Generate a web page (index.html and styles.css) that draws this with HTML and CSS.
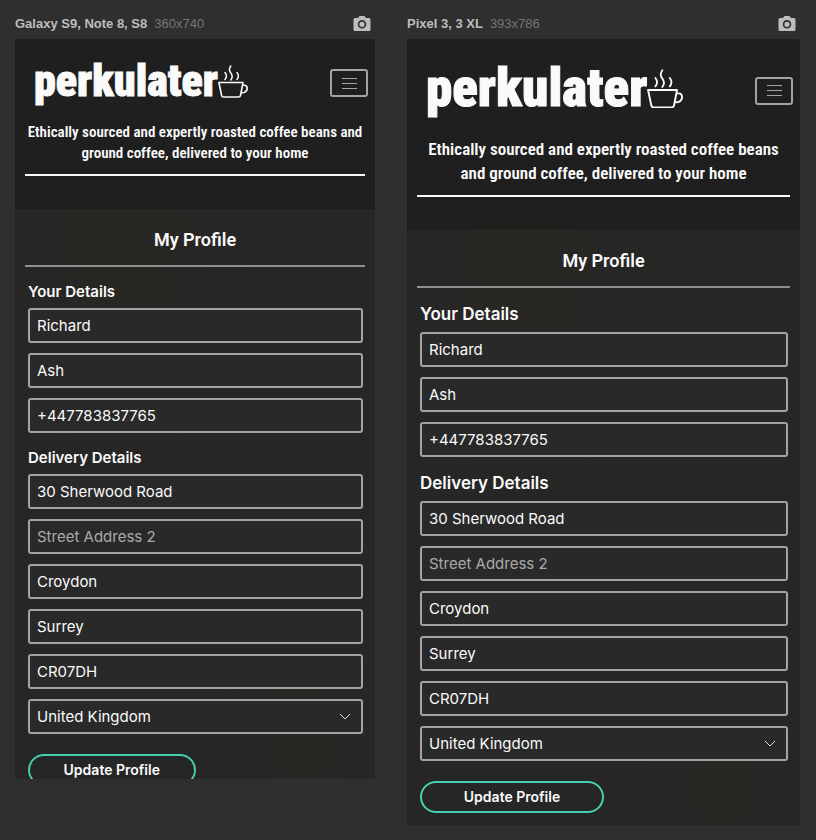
FILE: index.html
```html
<!DOCTYPE html>
<html lang="en">
<head>
<meta charset="utf-8">
<title>Perkulater – My Profile</title>
<link rel="stylesheet" href="styles.css">
</head>
<body>
<svg class="defs" aria-hidden="true">
  <symbol id="camera" viewBox="0 0 18 16">
    <path fill-rule="evenodd" d="M6.500 0h5l1.500 2H16a1.500 1.500 0 0 1 1.500 1.500v10a1.500 1.500 0 0 1-1.500 1.500H2a1.500 1.500 0 0 1-1.500-1.500v-10A1.500 1.500 0 0 1 2 2h3zM9 4a4.300 4.300 0 1 0 0 8.600a4.300 4.300 0 0 0 0-8.600zM9 5.700a2.600 2.600 0 1 1 0 5.200a2.600 2.600 0 0 1 0-5.200z"/>
  </symbol>
  <symbol id="cup" viewBox="0 0 30 33">
    <g fill="none" stroke="#fafafa" stroke-linecap="round" stroke-linejoin="round">
      <path stroke-width="1.600" d="M.9 17.500H25L22.500 30.500Q22.200 32 20.500 32H5.600Q4 32 3.600 30.500Z"/>
      <path stroke-width="1.600" d="M24.800 20.300h1.400q3 0 3 3t-3 4.200l-3 .3"/>
      <path stroke-width="1.500" d="M12.800 1q-2.700 3.500 0 7t0 7M7 7.500q2.800 3.500 0 7M19 7.500q2.800 3.500 0 7"/>
    </g>
  </symbol>
</svg>
<main class="board">
  <section class="device">
    <header class="device-bar">
      <h2 class="device-name">Galaxy S9, Note 8, S8</h2>
      <span class="device-size">360x740</span>
      <button class="shot" type="button" aria-label="Take screenshot"><svg><use href="#camera"/></svg></button>
    </header>
    <div class="screen screen-s">
      <header class="top">
        <nav class="nav">
          <a class="logo" href="#">perkulater<svg class="cup"><use href="#cup"/></svg></a>
          <button class="burger" type="button" aria-label="Menu"><span></span><span></span><span></span></button>
        </nav>
        <p class="tagline">Ethically sourced and expertly roasted coffee beans and ground coffee, delivered to your home</p>
      </header>
      <form class="profile">
        <h1 class="title">My Profile</h1>
        <fieldset class="group">
          <legend class="legend">Your Details</legend>
          <input class="field" aria-label="First name" value="Richard">
          <input class="field" aria-label="Last name" value="Ash">
          <input class="field" type="tel" aria-label="Phone number" value="+447783837765">
        </fieldset>
        <fieldset class="group">
          <legend class="legend">Delivery Details</legend>
          <input class="field" aria-label="Street Address 1" value="30 Sherwood Road">
          <input class="field" aria-label="Street Address 2" placeholder="Street Address 2">
          <input class="field" aria-label="Town or city" value="Croydon">
          <input class="field" aria-label="County" value="Surrey">
          <input class="field" aria-label="Postcode" value="CR07DH">
          <div class="pick">
            <select class="field" aria-label="Country"><option>United Kingdom</option></select>
            <svg class="chevron" viewBox="0 0 12 8"><path d="M1 1l5 5 5-5"/></svg>
          </div>
        </fieldset>
        <button class="update" type="button">Update Profile</button>
      </form>
    </div>
  </section>
  <section class="device">
    <header class="device-bar">
      <h2 class="device-name">Pixel 3, 3 XL</h2>
      <span class="device-size">393x786</span>
      <button class="shot" type="button" aria-label="Take screenshot"><svg><use href="#camera"/></svg></button>
    </header>
    <div class="screen screen-l">
      <header class="top">
        <nav class="nav">
          <a class="logo" href="#">perkulater<svg class="cup"><use href="#cup"/></svg></a>
          <button class="burger" type="button" aria-label="Menu"><span></span><span></span><span></span></button>
        </nav>
        <p class="tagline">Ethically sourced and expertly roasted coffee beans and ground coffee, delivered to your home</p>
      </header>
      <form class="profile">
        <h1 class="title">My Profile</h1>
        <fieldset class="group">
          <legend class="legend">Your Details</legend>
          <input class="field" aria-label="First name" value="Richard">
          <input class="field" aria-label="Last name" value="Ash">
          <input class="field" type="tel" aria-label="Phone number" value="+447783837765">
        </fieldset>
        <fieldset class="group">
          <legend class="legend">Delivery Details</legend>
          <input class="field" aria-label="Street Address 1" value="30 Sherwood Road">
          <input class="field" aria-label="Street Address 2" placeholder="Street Address 2">
          <input class="field" aria-label="Town or city" value="Croydon">
          <input class="field" aria-label="County" value="Surrey">
          <input class="field" aria-label="Postcode" value="CR07DH">
          <div class="pick">
            <select class="field" aria-label="Country"><option>United Kingdom</option></select>
            <svg class="chevron" viewBox="0 0 12 8"><path d="M1 1l5 5 5-5"/></svg>
          </div>
        </fieldset>
        <button class="update" type="button">Update Profile</button>
      </form>
    </div>
  </section>
</main>
</body>
</html>
```
FILE: styles.css
```css
* { box-sizing: border-box; }
body {
  margin: 0;
  background: #2f2f2f;
  color: #fafafa;
  font-family: Inter, "Open Sans", sans-serif;
}
h1, h2, p { margin: 0; }
button { padding: 0; font-family: inherit; color: inherit; background: none; border: 0; }
.defs { position: absolute; width: 0; height: 0; }

.board {
  display: grid;
  grid-template-columns: minmax(0, 360fr) minmax(0, 393fr);
  gap: 32px;
  align-items: start;
  padding: 8px 16px 15px 15px;
}

/* Device caption */
.device-bar {
  display: flex;
  align-items: center;
  gap: 7px;
  height: 31px;
  padding-right: 4px;
  font: 13px "Liberation Sans", sans-serif;
}
.device-name { font-size: 13px; font-weight: 700; color: #bdbdbd; }
.device-size { color: #757575; }
.shot { margin-left: auto; height: 16px; }
.shot svg { display: block; width: 18px; height: 16px; fill: #bdbdbd; }

/* Device screens */
.screen {
  overflow: hidden;
  border-radius: 3px;
  background:
    radial-gradient(ellipse at 30% 22%, #282723 0, transparent 40%),
    radial-gradient(ellipse at 80% 92%, #282724 0, transparent 30%),
    #262626;
}
.screen-s { aspect-ratio: 360 / 740; --text: 15px; --line: 21px; --logo: 44px; --nav: 83px; --tag: 15px; --cup: 30px; }
.screen-l { aspect-ratio: 393 / 786; --text: 17px; --line: 24px; --logo: 53px; --nav: 98px; --tag: 17px; --cup: 36px; }

.top { padding: 0 10px 33px; background: linear-gradient(#1f1f1f 80%, #211f1d 92%, #1f1e1d); }
.nav {
  display: flex;
  align-items: center;
  justify-content: space-between;
  height: var(--nav);
  margin-right: -3px;
  padding: 5px 0 0 9px;
}
.logo {
  display: flex;
  align-items: center;
  padding-bottom: 4px;
  color: #fafafa;
  font: 900 var(--logo)/1 "Roboto Condensed", Roboto, "Liberation Sans", sans-serif;
  -webkit-text-stroke: 1px #fafafa;
  text-decoration: none;
}
.cup { width: var(--cup); aspect-ratio: 30 / 33; }
.burger {
  display: flex;
  flex-direction: column;
  align-items: center;
  justify-content: center;
  gap: 4px;
  width: 38px;
  height: 28px;
  border: 2px solid #a3a3a3;
  border-radius: 3px;
}
.burger span { width: 15px; height: 1px; background: #a3a3a3; }
.tagline {
  padding-bottom: 10px;
  border-bottom: 2px solid #fafafa;
  font: 600 var(--tag)/var(--line) "Roboto Condensed", Roboto, sans-serif;
  text-align: center;
}

/* Profile form */
.profile { padding: 0 12px 12px 13px; }
.title {
  margin: 0 -2px 0 -3px;
  padding: 17px 0 12px;
  border-bottom: 2px solid #8f8f8f;
  font: 600 18px/27px Roboto, sans-serif;
  text-align: center;
}
.group {
  display: flex;
  flex-direction: column;
  gap: 10px;
  min-width: 0;
  margin: 0;
  padding: 0;
  border: 0;
}
.legend { padding: 14px 0 6px; font-size: var(--text); line-height: var(--line); font-weight: 600; }
.field {
  appearance: none;
  display: block;
  width: 100%;
  height: 35px;
  margin: 0;
  padding: 0 7px 1px;
  border: 2px solid #a3a3a3;
  border-radius: 3px;
  background: #292929;
  color: #fafafa;
  font: 15px/21px Inter, "Open Sans", sans-serif;
}
.field::placeholder { color: #a9a9a9; opacity: 1; }
.pick { position: relative; }
.chevron { position: absolute; right: 12px; top: 14px; width: 12px; height: 8px; fill: none; stroke: #dedede; stroke-width: 1; pointer-events: none; }
.update {
  display: block;
  width: 50%;
  height: 32px;
  margin-top: 20px;
  padding-bottom: 2px;
  border: 2px solid #48cfad;
  border-radius: 16px;
  font-size: 14px;
  font-weight: 600;
}
```
